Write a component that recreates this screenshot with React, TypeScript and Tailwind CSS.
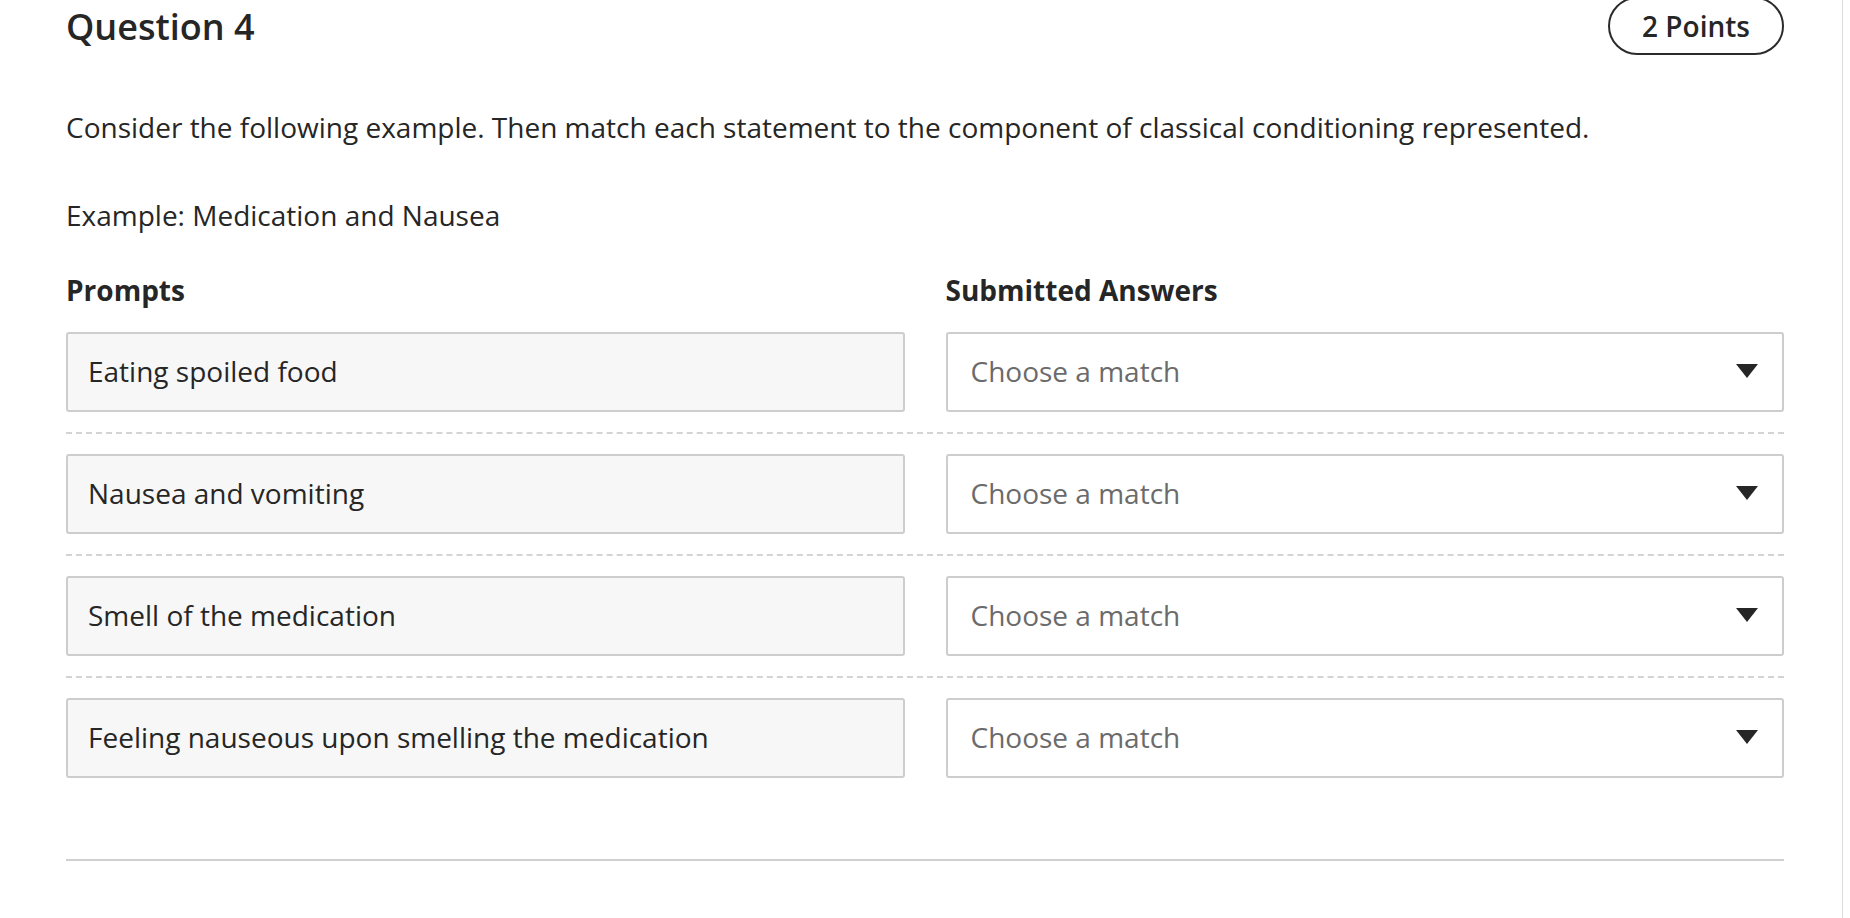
import React from "react";

const prompts = [
  "Eating spoiled food",
  "Nausea and vomiting",
  "Smell of the medication",
  "Feeling nauseous upon smelling the medication",
];

function Arrow() {
  return (
    <svg width="22" height="14" viewBox="0 0 22 14" className="shrink-0">
      <polygon points="0,0 22,0 11,14" fill="#262626" />
    </svg>
  );
}

export default function App() {
  return (
    <div
      className="w-[1850px] h-[918px] bg-white overflow-hidden flex text-[#262626]"
      style={{ fontFamily: '"Open Sans", "Noto Sans", Arial, sans-serif' }}
    >
      <div className="w-[1843px] h-full border-r border-[#dcdcdc] pl-[66px] pr-[58px]">
        {/* header */}
        <div className="flex justify-between items-start h-[55px]">
          <h1 className="mt-[2px] text-[36px] leading-[49px] font-semibold">Question 4</h1>
          <div className="-mt-[3px] h-[58px] w-[176px] rounded-full border-2 border-[#2b2b2b] flex items-center justify-center text-[28px] font-semibold leading-[38px]">
            2 Points
          </div>
        </div>

        <p className="mt-[53px] text-[28px] leading-[38px]">
          Consider the following example. Then match each statement to the component of classical conditioning represented.
        </p>

        <p className="mt-[50px] text-[28px] leading-[38px]">Example: Medication and Nausea</p>

        <div className="mt-[37px] grid grid-cols-2 gap-x-[41px] text-[28px] leading-[38px] font-bold">
          <div>Prompts</div>
          <div>Submitted Answers</div>
        </div>

        <div className="mt-[3px]">
          {prompts.map((p, i) => (
            <div
              key={p}
              className={
                i < prompts.length - 1
                  ? "grid grid-cols-2 gap-x-[41px] pt-[20px] pb-[20px] border-b-2 border-dashed border-[#d4d4d4]"
                  : "grid grid-cols-2 gap-x-[41px] pt-[20px]"
              }
            >
              <div className="h-[80px] rounded-[3px] border-2 border-[#cdcdcd] bg-[#f7f7f7] flex items-center pl-[20px] pb-[3px] text-[28px] leading-[38px]">
                {p}
              </div>
              <div className="h-[80px] rounded-[3px] border-2 border-[#cdcdcd] bg-white flex items-center justify-between pl-[23px] pr-[24px] pb-[3px] text-[28px] leading-[38px] text-[#6b6b6b]">
                <span>Choose a match</span>
                <Arrow />
              </div>
            </div>
          ))}
        </div>

        <div className="mt-[81px] h-[2px] bg-[#d0d0d0]" />
      </div>
    </div>
  );
}
